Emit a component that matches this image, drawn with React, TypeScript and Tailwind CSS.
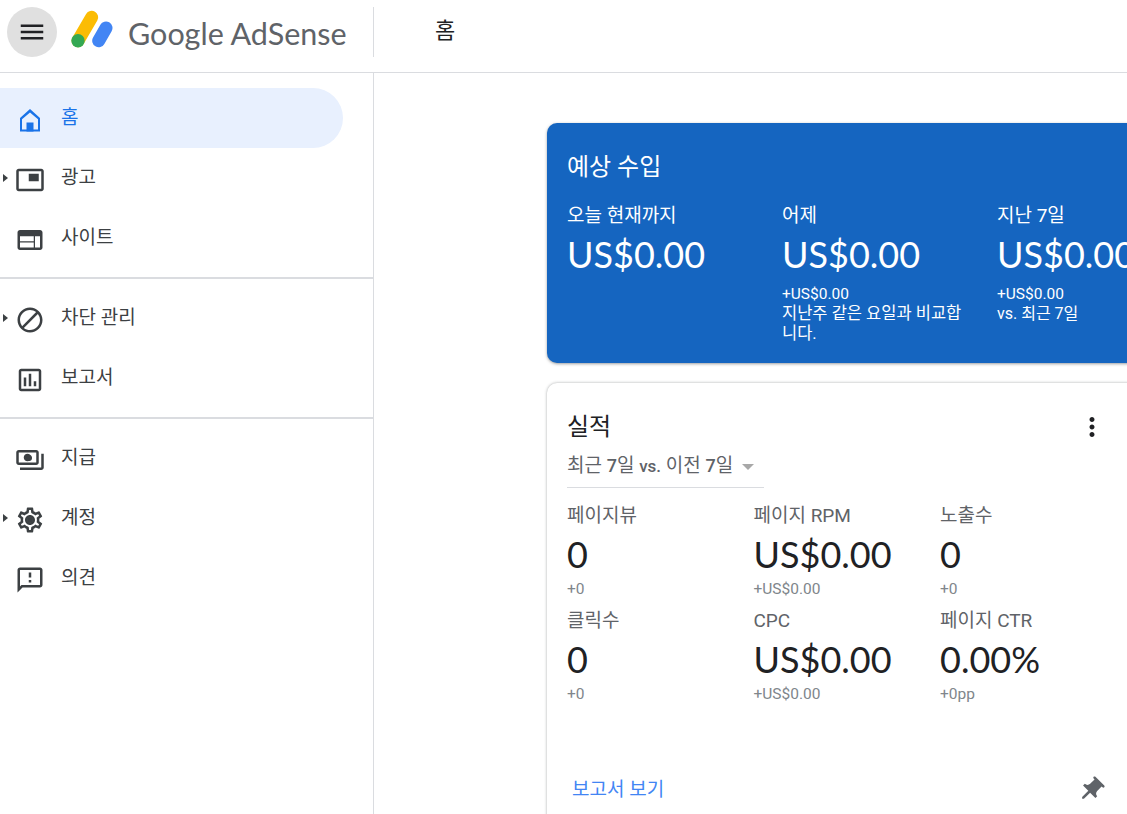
import {
  MdBlock,
  MdMenu,
  MdMoreVert,
  MdOutlineAssessment,
  MdOutlineFeedback,
  MdOutlinePayments,
  MdOutlineSettings,
  MdPictureInPicture,
  MdPushPin,
  MdWeb,
} from 'react-icons/md';
import type { ReactNode } from 'react';

const uiFont = "font-['Roboto','Noto_Sans_CJK_KR',sans-serif]";
const bigFont = "font-['Lato','Noto_Sans_CJK_KR',sans-serif]";

const HomeIcon = () => (
  <svg viewBox="0 0 22 24" className="w-[22px] h-6" fill="#1a73e8">
    <path fillRule="evenodd" d="M11 1 1 10v13.5h20V10L11 1Zm0 3.4L3 11.2v10.3h16V11.2L11 4.4Z" />
    <path d="M7.5 14.5h7v9h-7z" />
  </svg>
);

const Logo = () => (
  <svg viewBox="0 0 50 50" className="w-[50px] h-[50px]">
    <line x1="27.7" y1="10.3" x2="14" y2="33.7" stroke="#fbbc04" strokeWidth="13" strokeLinecap="round" />
    <line x1="42" y1="21" x2="34.7" y2="33.7" stroke="#4285f4" strokeWidth="13" strokeLinecap="round" />
    <circle cx="14" cy="33.7" r="6.7" fill="#34a853" />
  </svg>
);

type NavItemProps = {
  icon: ReactNode;
  label: string;
  arrow?: boolean;
  active?: boolean;
};

const NavItem = ({ icon, label, arrow, active }: NavItemProps) => (
  <div
    className={`relative flex items-center h-[60px] w-[343px] rounded-r-[30px] pl-[15px] ${
      active ? 'bg-[#e8f0fe]' : ''
    }`}
  >
    {arrow && (
      <span className="absolute left-[3px] top-[26px] w-0 h-0 border-y-[4px] border-y-transparent border-l-[5px] border-l-[#3c4043]" />
    )}
    <span className="relative w-[30px] h-[30px] mt-1 flex items-center justify-center shrink-0 text-[#3c4043]">
      {icon}
    </span>
    <span
      className={`ml-[16px] -mt-[1px] text-[19px] leading-6 ${active ? 'text-[#1a73e8]' : 'text-[#3c4043]'}`}
    >
      {label}
    </span>
  </div>
);

const Sidebar = () => (
  <aside className="w-[374px] shrink-0 border-r border-[#dadce0] pt-[15px]">
    <NavItem active icon={<HomeIcon />} label="홈" />
    <NavItem arrow icon={<MdPictureInPicture size={34} />} label="광고" />
    <NavItem icon={<MdWeb size={32} />} label="사이트" />
    <div className="my-[9px] h-[2px] bg-[#dadce0]" />
    <NavItem arrow icon={<MdBlock size={30} />} label="차단 관리" />
    <NavItem icon={<MdOutlineAssessment size={30} />} label="보고서" />
    <div className="my-[9px] h-[2px] bg-[#dadce0]" />
    <NavItem
      icon={
        <>
          <MdOutlinePayments size={30} />
          <span className="absolute left-[11px] top-[10px] w-[6px] h-[6px] rounded-full bg-[#3c4043]" />
        </>
      }
      label="지급"
    />
    <NavItem
      arrow
      icon={
        <>
          <MdOutlineSettings size={32} />
          <span className="absolute left-[12px] top-[12px] w-[6px] h-[6px] rounded-full bg-[#3c4043]" />
        </>
      }
      label="계정"
    />
    <NavItem icon={<MdOutlineFeedback size={30} />} label="의견" />
  </aside>
);

const EarningColumn = ({ label, value, children }: { label: string; value: string; children?: ReactNode }) => (
  <div className="w-[215px] shrink-0 pr-[33px]">
    <div className="text-[19px] leading-6">{label}</div>
    <div className={`${bigFont} text-[36px] leading-[46px] mt-[3px] whitespace-nowrap`}>{value}</div>
    <div className="mt-[7px] text-[15.5px] leading-[20px]">{children}</div>
  </div>
);

const Metric = ({ label, value, change }: { label: string; value: string; change: string }) => (
  <div className="w-[186.5px] shrink-0 h-[105px]">
    <div className="text-[19px] leading-6 text-[#5f6368] whitespace-nowrap">{label}</div>
    <div className={`${bigFont} text-[36px] leading-[46px] mt-[3px] text-[#202124]`}>{value}</div>
    <div className="text-[15.5px] leading-[19px] text-[#80868b] mt-[3px]">{change}</div>
  </div>
);

export default function App() {
  return (
    <div className={`${uiFont} h-[814px] w-[1127px] overflow-hidden bg-white`}>
      <header className="flex items-start h-[73px] border-b border-[#dadce0] pl-[7px] pt-[7px]">
        <button className="flex items-center justify-center w-[50px] h-[50px] rounded-full bg-[#e0e0e0] text-[#202124]">
          <MdMenu size={30} />
        </button>
        <div className="w-[50px] h-[50px] ml-[7px]">
          <Logo />
        </div>
        <div className={`${bigFont} ml-[14px] w-[245px] text-[30.5px] leading-[50px] mt-[1px] text-[#5f6368] whitespace-nowrap`}>
          Google AdSense
        </div>
        <div className="w-px h-[50px] bg-[#dadce0]" />
        <div className="ml-[61px] text-[22px] leading-[48px] text-[#202124]">홈</div>
      </header>
      <div className="flex h-[741px]">
        <Sidebar />
        <main className="pl-[173px] pt-[50px] overflow-hidden">
          <section className="w-[640px] h-[240px] rounded-[10px] bg-[#1565c0] text-white pl-5 pt-[28px] shadow-[0_1px_3px_rgba(60,64,67,0.5)]">
            <h2 className="text-[24px] leading-8">예상 수입</h2>
            <div className="flex mt-[21px]">
              <EarningColumn label="오늘 현재까지" value="US$0.00" />
              <EarningColumn label="어제" value="US$0.00">
                +US$0.00
                <br />
                <span className="text-[16.5px]">지난주 같은 요일과 비교합니다.</span>
              </EarningColumn>
              <EarningColumn label="지난 7일" value="US$0.00">
                +US$0.00
                <br />
                <span className="text-[16px]">vs. 최근 7일</span>
              </EarningColumn>
            </div>
          </section>
          <section className="relative w-[640px] h-[460px] mt-[20px] rounded-[10px] bg-white pl-5 pt-[28px] shadow-[0_0_3px_rgba(60,64,67,0.45)]">
            <div className="flex items-center justify-between w-[540px]">
              <h2 className="text-[24px] leading-8 text-[#202124]">실적</h2>
              <MdMoreVert size={30} className="text-[#202124]" />
            </div>
            <div className="flex items-center w-[197px] h-[38px] mt-[7px] pb-[5px] border-b border-[#dadce0] text-[19px] text-[#5f6368] whitespace-nowrap">
              <span>
                최근 <span className="font-medium text-[18px]">7</span>일{' '}
                <span className="font-medium text-[17px]">vs.</span> 이전{' '}
                <span className="font-medium text-[18px]">7</span>일
              </span>
              <span className="ml-[9px] mt-[2px] w-0 h-0 border-x-[6px] border-x-transparent border-t-[6px] border-t-[#a8a8a8]" />
            </div>
            <div className="flex flex-wrap w-[560px] mt-[16px]">
              <Metric label="페이지뷰" value="0" change="+0" />
              <Metric label="페이지 RPM" value="US$0.00" change="+US$0.00" />
              <Metric label="노출수" value="0" change="+0" />
              <Metric label="클릭수" value="0" change="+0" />
              <Metric label="CPC" value="US$0.00" change="+US$0.00" />
              <Metric label="페이지 CTR" value="0.00%" change="+0pp" />
            </div>
            <div className="flex items-center justify-between w-[539px] mt-[61px] pl-[5px]">
              <span className="text-[19px] text-[#4285f4]">보고서 보기</span>
              <MdPushPin size={30} className="text-[#5f6368] rotate-45" />
            </div>
          </section>
        </main>
      </div>
    </div>
  );
}
